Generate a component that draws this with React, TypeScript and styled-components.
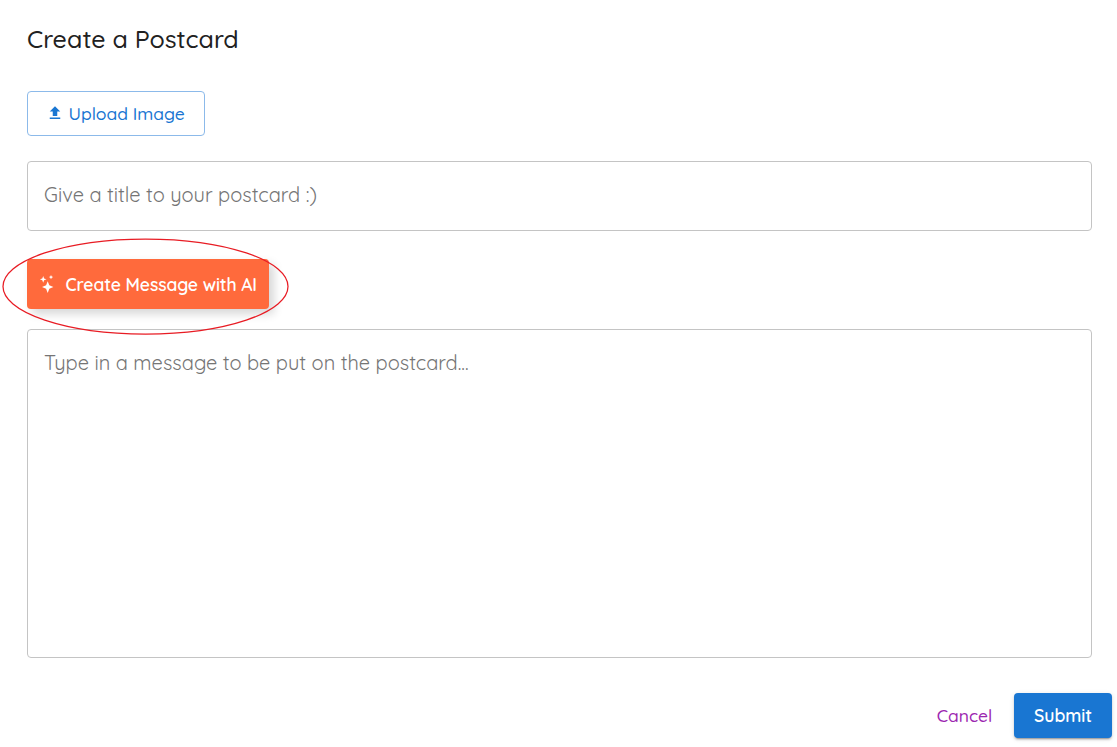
import React from "react";
import styled, { createGlobalStyle } from "styled-components";

const GlobalStyle = createGlobalStyle`
  *, *::before, *::after { box-sizing: border-box; }
  body {
    margin: 0;
    background: #fff;
    font-family: Quicksand, Lato, "Open Sans", sans-serif;
    overflow: hidden;
  }
`;

const Page = styled.main`
  height: 747px;
  display: flex;
  flex-direction: column;
  align-items: flex-start;
  padding: 22px 5px 9px 27px;
`;

const Title = styled.h1`
  margin: 0 0 35px;
  font-size: 25px;
  line-height: 34px;
  font-weight: 500;
  white-space: nowrap;
  color: #212121;
`;

const Button = styled.button`
  display: flex;
  align-items: center;
  border: 0;
  border-radius: 4px;
  background: transparent;
  font-family: inherit;
  font-size: 17.5px;
  font-weight: 500;
  line-height: 24px;
  white-space: nowrap;
  cursor: pointer;
`;

const UploadButton = styled(Button)`
  width: 178px;
  height: 45px;
  padding: 0 0 1px 18px;
  gap: 4.5px;
  border: 1px solid #8cbaea;
  color: #1976d2;
`;

const Field = styled.input`
  width: 1065px;
  height: 70px;
  margin-top: 25px;
  padding: 0 16px 3px;
  border: 1px solid #c4c4c4;
  border-radius: 4px;
  outline: 0;
  font: 400 20px/28px Quicksand, Lato, sans-serif;
  &::placeholder { color: #757575; opacity: 1; }
`;

const MessageField = styled.textarea`
  display: block;
  width: 1065px;
  height: 329px;
  margin-top: 20px;
  padding: 19px 16px;
  border: 1px solid #c4c4c4;
  border-radius: 4px;
  outline: 0;
  resize: none;
  font: 400 20px/28px Quicksand, Lato, sans-serif;
  &::placeholder { color: #757575; opacity: 1; }
`;

const Highlight = styled.div`
  position: relative;
  margin-top: 28px;
`;

const AiButton = styled(Button)`
  width: 242px;
  height: 50px;
  padding: 0 0 0 10px;
  gap: 8.5px;
  background: #ff6a3c;
  color: #fff;
  font-weight: 600;
  letter-spacing: -0.12px;
  box-shadow: 5px 5px 10px rgba(0, 0, 0, 0.16);
`;

const Ring = styled.svg`
  position: absolute;
  left: -25px;
  top: -21px;
  pointer-events: none;
`;

const Actions = styled.footer`
  align-self: flex-end;
  display: flex;
  margin-top: 35px;
`;

const CancelButton = styled(Button)`
  width: 99px;
  height: 45px;
  justify-content: center;
  padding: 0 0 1px;
  color: #9c27b0;
`;

const SubmitButton = styled(Button)`
  width: 98px;
  height: 45px;
  justify-content: center;
  padding: 0 0 1px;
  background: #1976d2;
  color: #fff;
  font-weight: 600;
  letter-spacing: -0.05px;
  box-shadow: 0 3px 1px -2px rgba(0, 0, 0, 0.2), 0 2px 2px rgba(0, 0, 0, 0.14),
    0 1px 5px rgba(0, 0, 0, 0.12);
`;

const UploadIcon = () => (
  <svg width="18" height="18" viewBox="0 0 24 24" fill="currentColor">
    <path d="M5 20h14v-2H5v2zm0-10h4v6h6v-6h4l-7-7-7 7z" />
  </svg>
);

const SparkleIcon = () => (
  <svg width="20" height="20" viewBox="0 0 20 20" fill="currentColor">
    <path d="M10.7 7.2l1.6 4.1 4.1 1.7-4.1 1.7-1.6 4.3-1.6-4.3L5 13l4.1-1.7z" />
    <path d="M6.2 2.1l.9 2.3 2.4.9-2.4 1-.9 2.4-.9-2.4-2.4-1 2.4-.9z" />
    <path d="M14 .9l.7 1.5 1.5.6-1.5.7L14 5.2l-.7-1.5-1.5-.7 1.5-.6z" />
  </svg>
);

export default function App() {
  return (
    <>
      <GlobalStyle />
      <Page>
        <Title>Create a Postcard</Title>
        <UploadButton>
          <UploadIcon />
          Upload Image
        </UploadButton>
        <Field placeholder="Give a title to your postcard :)" />
        <Highlight>
          <AiButton>
            <SparkleIcon />
            Create Message with AI
          </AiButton>
          <Ring width="288" height="98" viewBox="0 0 288 98" fill="none">
            <ellipse cx="143.5" cy="48.5" rx="142.5" ry="47.5" stroke="#e81c24" strokeWidth="1.25" />
          </Ring>
        </Highlight>
        <MessageField placeholder="Type in a message to be put on the postcard..." />
        <Actions>
          <CancelButton>Cancel</CancelButton>
          <SubmitButton>Submit</SubmitButton>
        </Actions>
      </Page>
    </>
  );
}
